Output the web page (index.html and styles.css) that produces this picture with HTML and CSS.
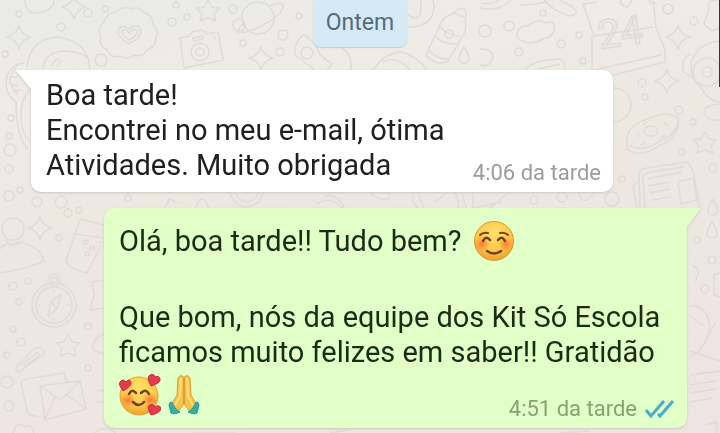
FILE: index.html
```html
<!DOCTYPE html>
<html lang="pt-BR">
<head>
<meta charset="utf-8">
<meta name="viewport" content="width=device-width, initial-scale=1">
<title>Conversa</title>
<link rel="stylesheet" href="styles.css">
</head>
<body>
<svg class="wallpaper" viewBox="0 0 720 433" preserveAspectRatio="xMidYMid slice" aria-hidden="true">
  <defs>
    <path id="spark" d="M0-12Q1-3 12 0Q2 3 0 12Q-2 3-12 0Q-2-3 0-12Z"/>
    <path id="star" d="M0-11L4-4L11-3L6 3L8 10L0 7L-8 10L-6 3L-11-3L-4-4Z"/>
    <path id="drop" d="M0-8Q10 7 0 8Q-10 7 0-8Z"/>
  </defs>
  <!-- top left: balloon, astronaut, badge, camera -->
  <path d="M25 0Q25 11 33 13Q47 14 54 4V0"/>
  <use href="#spark" x="19" y="37"/>
  <use href="#spark" x="74" y="7"/>
  <path d="M27 67Q30 39 57 37Q88 40 90 69M43 69Q45 51 66 51Q83 52 90 60M52 66Q53 60 59 59M57 67Q58 63 61 61"/>
  <path d="M24 63Q6 66 6 84Q6 95 16 102Q16 137 28 149M17 67Q10 72 10 83L17 94M11 77H17M10 84L18 86M13 92L20 90M31 88Q20 99 21 118Q22 136 31 142"/>
  <path d="M104 22Q107 12 116 12Q123 5 131 9Q140 6 144 13Q153 15 153 24Q160 31 156 37Q156 47 147 50Q143 58 134 55Q127 61 121 56Q111 59 107 50Q98 46 101 37Q96 28 104 22Z"/>
  <path d="M129 44Q117 36 118 30Q122 23 129 29Q137 22 141 30Q142 37 129 44Z"/>
  <path d="M129 40Q121 34 122 31Q125 27 129 33Q134 27 138 31Q137 36 129 40Z"/>
  <path d="M180 38L189 36L192 32L202 30L207 34L218 32L223 60L184 68ZM193 38L203 36V39L194 41ZM213 36L216 39"/>
  <circle cx="200" cy="52" r="9"/><circle cx="200" cy="52" r="4"/>
  <use href="#star" x="208" y="11"/>
  <!-- top centre: planet, rocket, bottle -->
  <circle cx="258" cy="18" r="16"/>
  <path d="M243 24Q229 38 255 29Q283 16 283 6Q283 1 269 6"/>
  <use href="#spark" x="261" y="58"/>
  <path d="M295 56Q294 40 304 35Q316 42 320 55L332 64L327 70M296 56L310 66L314 70M340 47Q352 52 351 70"/>
  <circle cx="307" cy="53" r="6"/>
  <path d="M405 0Q404 16 415 18Q421 18 421 6V0M406 27Q425 28 432 16Q435 8 433 0"/>
  <path d="M452 14L459 9Q466 7 466 15L465 21Q467 27 464 34L448 61Q437 67 426 55L440 25Q443 17 452 14ZM440 27Q448 36 461 36M435 36Q443 45 457 44M428 49Q437 60 449 59M454 13L464 17"/>
  <circle cx="449" cy="34" r="4"/>
  <path d="M373 70Q384 53 402 52Q418 57 427 70M382 62Q398 55 410 70"/>
  <use href="#drop" x="464" y="55"/>
  <!-- top right: cloud, calendar, owl -->
  <path d="M480 8Q500 12 511 0M481 3Q493 5 499 0M520 5Q541 5 548 0M544 0Q553 11 570 16Q580 14 574 8L560 0"/>
  <path d="M518 32Q520 25 528 26Q538 18 546 23Q556 20 554 30Q552 38 545 38Q530 47 519 39Q515 35 518 32Z"/>
  <path d="M583 4L594 36L653 27M583 4L597 2M653 0L656 27L665 50V62L597 79L592 69V36M594 70L661 55M620 0Q621 7 628 7L632 0M649 0Q650 4 656 3"/>
  <text x="600" y="49" transform="rotate(-8 600 49)">24</text>
  <use href="#spark" x="678" y="37"/>
  <use href="#spark" x="667" y="81"/>
  <path d="M525 70Q532 60 560 59Q566 61 565 70M538 69L560 64M720 0Q705 0 709 8L704 24L712 31L720 28M720 41Q697 43 691 63Q690 78 702 89Q709 101 720 102M690 54Q680 59 684 72L694 79M720 104Q703 105 704 113Q708 122 720 120"/>
  <circle cx="707" cy="72" r="14"/><circle cx="707" cy="72" r="5"/>
  <path d="M480 49Q492 48 493 57Q490 68 480 65"/>
  <!-- right side: donut, newspaper -->
  <circle cx="614" cy="105" r="17"/>
  <path d="M627 142Q626 125 648 119Q667 110 678 118Q681 135 661 145Q640 159 627 149ZM629 145Q642 153 660 141Q678 133 678 121"/>
  <ellipse cx="651" cy="131" rx="7" ry="5"/>
  <path d="M637 133L640 137M643 125L647 122M664 122L668 126M660 138L665 135M640 145L645 143"/>
  <use href="#star" x="705" y="143"/>
  <path d="M640 208L639 174Q640 169 647 168L687 162L693 170L700 208M645 208L643 178Q644 173 650 172L684 167M647 179L682 172M648 186L670 182M650 193L670 189M652 200L671 197M678 182L693 178L697 200L681 204ZM639 181L633 186L637 208"/>
  <use href="#drop" x="713" y="207"/><use href="#drop" x="712" y="230"/>
  <path d="M692 265Q703 270 695 281M714 275L720 273M714 275V295L720 297M690 306Q709 305 710 330Q704 350 690 357M690 316L703 326M690 351L720 361M707 338L716 322M690 375L720 371M690 385L716 381M690 393L716 389M690 402L713 398M705 425L717 422V433"/>
  <!-- gap between messages -->
  <path d="M230 193Q235 207 246 207Q260 206 263 193M235 193Q240 202 247 202Q256 201 258 193M196 208Q199 196 205 200L209 208M165 207L170 199L177 203M317 204Q330 195 342 208M324 196Q338 193 344 208M370 194L380 199H389V193M413 193Q411 202 418 208M418 193L424 208M435 202L447 193M455 193Q460 200 458 208M462 193L466 208M473 193V208L501 202M490 208L508 193M579 193Q584 208 593 193"/>
  <!-- left side: person, glass, compass, letter -->
  <circle cx="13" cy="229" r="11"/>
  <path d="M0 249Q7 241 15 245L21 242Q42 248 44 261Q27 269 0 273M6 240L11 246L18 241"/>
  <use href="#spark" x="40" y="228"/>
  <path d="M80 219L104 225M80 219L66 261Q69 269 87 273L101 246M75 234L103 238M70 249L66 260M98 242L104 243"/>
  <circle cx="86" cy="242" r="2"/><circle cx="92" cy="248" r="2"/><circle cx="87" cy="254" r="2"/>
  <circle cx="54" cy="305" r="22"/><circle cx="54" cy="305" r="18"/><circle cx="54" cy="280" r="6"/><circle cx="54" cy="280" r="3"/>
  <path d="M61 294L57 309L48 316L51 302ZM51 302L57 309M54 289V292M54 318V321M38 305H41M67 305H70M103 280L92 282L94 295L90 310L103 308M104 334Q92 338 93 350L104 354"/>
  <use href="#star" x="68" y="346"/>
  <path d="M16 367L35 348Q44 346 44 354L22 370Q15 374 16 367ZM21 365L37 353Q41 354 38 357L24 366"/>
  <path d="M39 417L28 414L21 384Q21 380 26 379L64 373L67 382M40 386L80 381L86 409L45 420ZM40 386L61 400L80 381M45 420L55 396M86 409L67 395M98 390L104 391M97 402H104"/>
  <path d="M13 433L15 427Q21 422 25 427Q31 423 34 433M94 433Q104 424 116 433M192 433H236M330 433L350 430M560 433L590 431"/>
  <!-- confetti -->
  <g>
    <circle cx="19" cy="14" r="3"/><circle cx="61" cy="27" r="4"/><circle cx="88" cy="13" r="4"/><circle cx="105" cy="9" r="3"/><circle cx="101" cy="60" r="6"/><circle cx="5" cy="54" r="3"/><circle cx="172" cy="22" r="4"/><circle cx="187" cy="17" r="3"/><circle cx="176" cy="5" r="3"/><circle cx="233" cy="9" r="4"/><circle cx="239" cy="25" r="6"/>
    <circle cx="283" cy="35" r="5"/><circle cx="299" cy="16" r="3"/><circle cx="280" cy="52" r="4"/><circle cx="243" cy="43" r="3"/><circle cx="509" cy="26" r="5"/><circle cx="543" cy="13" r="3"/><circle cx="579" cy="35" r="3"/><circle cx="561" cy="44" r="4"/><circle cx="519" cy="52" r="4"/><circle cx="583" cy="61" r="3"/><circle cx="668" cy="9" r="5"/><circle cx="694" cy="21" r="4"/><circle cx="485" cy="31" r="6"/>
    <circle cx="642" cy="83" r="4"/><circle cx="645" cy="97" r="3"/><circle cx="679" cy="110" r="4"/><circle cx="693" cy="122" r="3"/><circle cx="682" cy="152" r="3"/><circle cx="713" cy="168" r="4"/><circle cx="622" cy="179" r="3"/><circle cx="612" cy="199" r="7"/><circle cx="712" cy="260" r="4"/><circle cx="705" cy="289" r="4"/><circle cx="697" cy="240" r="3"/>
    <circle cx="11" cy="118" r="3"/><circle cx="9" cy="136" r="3"/><circle cx="10" cy="150" r="6"/><circle cx="9" cy="169" r="4"/><circle cx="9" cy="196" r="5"/><circle cx="20" cy="190" r="3"/><circle cx="37" cy="202" r="5"/><circle cx="61" cy="202" r="6"/><circle cx="68" cy="213" r="4"/><circle cx="59" cy="238" r="3"/><circle cx="79" cy="210" r="3"/><circle cx="128" cy="198" r="3"/><circle cx="534" cy="200" r="4"/><circle cx="562" cy="197" r="5"/><circle cx="13" cy="286" r="4"/><circle cx="19" cy="302" r="3"/><circle cx="28" cy="281" r="3"/><circle cx="13" cy="329" r="3"/><circle cx="21" cy="342" r="4"/><circle cx="88" cy="326" r="3"/><circle cx="7" cy="382" r="6"/><circle cx="9" cy="406" r="5"/><circle cx="7" cy="355" r="3"/><circle cx="88" cy="368" r="3"/>
  </g>
</svg>
<div class="edge"></div>

<main class="chat">
  <div class="day">Ontem</div>

  <article class="message received">
    <svg class="tail" viewBox="0 0 16 20" aria-hidden="true"><path d="M16 0H1Q-1 0 1 2L16 20Z"/></svg>
    <p class="text">Boa tarde!<br>Encontrei no meu e-mail, ótima<br>Atividades. Muito obrigada</p>
    <footer class="meta"><time datetime="16:06">4:06 da tarde</time></footer>
  </article>

  <article class="message sent">
    <svg class="tail" viewBox="0 0 16 20" aria-hidden="true"><path d="M0 0H13Q15 0 13 3L0 20Z"/></svg>
    <p class="text greeting">Olá, boa tarde!! Tudo bem?
      <svg class="emoji" viewBox="0 0 42 42" role="img" aria-label="Rosto sorridente">
        <defs>
          <radialGradient id="face" cx=".5" cy=".3" r=".7"><stop offset="0" stop-color="#ffe16b"/><stop offset=".65" stop-color="#fdc748"/><stop offset="1" stop-color="#eda12e"/></radialGradient>
          <radialGradient id="blush"><stop offset="0" stop-color="#f9682e" stop-opacity=".85"/><stop offset="1" stop-color="#f9863a" stop-opacity="0"/></radialGradient>
        </defs>
        <circle cx="21" cy="21" r="19.5" fill="url(#face)" stroke="#dc972d"/>
        <circle cx="9" cy="24" r="8" fill="url(#blush)"/><circle cx="33" cy="24" r="8" fill="url(#blush)"/>
        <path class="feature" d="M10 21Q13 15 17 20M25 20Q29 15 32 21M14 31Q21 36 28 31"/>
        <path class="brow" d="M7 15Q10 12 15 13M27 13Q32 12 35 15"/>
      </svg>
    </p>
    <p class="text">Que bom, nós da equipe dos Kit Só Escola<br>ficamos muito felizes em saber!! Gratidão</p>
    <p class="reactions">
      <svg class="emoji" viewBox="0 0 42 42" role="img" aria-label="Rosto sorridente com corações">
        <circle cx="20" cy="22" r="19" fill="url(#face)" stroke="#e6a334"/>
        <circle cx="9" cy="26" r="8" fill="url(#blush)"/><circle cx="31" cy="26" r="8" fill="url(#blush)"/>
        <path class="feature" d="M10 20Q13 14 17 19M22 19Q27 14 30 20M14 28Q20 34 25 28"/>
        <g class="hearts">
          <path d="M4 17Q-1 10 1 8Q4 4 7 8Q10 4 12 8Q13 12 4 17Z"/>
          <path d="M32 12Q27 3 31 1Q35-1 36 3Q40 1 41 5Q42 9 32 12Z"/>
          <path d="M32 41Q27 32 31 31Q34 29 36 33Q40 30 42 34Q42 39 32 41Z"/>
        </g>
      </svg>
      <svg class="emoji" viewBox="0 0 42 42" role="img" aria-label="Mãos juntas">
        <path d="M21 3Q17 0 15 4L14 21L8 31L12 38Q19 36 21 28Q23 36 30 38L34 31L28 21L27 4Q25 0 21 3Z" fill="#f9c348" stroke="#dc9e35"/>
        <path d="M18 4L17 22L12 31M24 4L25 22L30 31" fill="none" stroke="#ffdf7b" stroke-width="2"/>
        <path d="M21 4V29" stroke="#b97a2c" stroke-width="1"/>
        <path d="M9 28Q6 28 6 31L8 39Q11 41 17 38Q11 35 9 28ZM33 28Q36 28 36 31L34 39Q31 41 25 38Q31 35 33 28Z" fill="#35ada7" stroke="#299b92"/>
      </svg>
    </p>
    <footer class="meta">
      <time datetime="16:51">4:51 da tarde</time>
      <svg class="ticks" viewBox="0 0 30 20" role="img" aria-label="Lida"><path d="M1 11L6 17L19 2M13 15L15 17L28 2"/></svg>
    </footer>
  </article>
</main>
</body>
</html>
```
FILE: styles.css
```css
* {
  box-sizing: border-box;
}

body {
  margin: 0;
  min-height: 100vh;
  position: relative;
  overflow: hidden;
  font-family: Roboto, "Liberation Sans", sans-serif;
  background: linear-gradient(170deg, #ebebe6 0%, #edece5 22%, #eee7e1 45%, #efe5e0 100%);
}

.wallpaper {
  position: absolute;
  inset: 0;
  width: 100%;
  height: 100%;
  fill: none;
  stroke: #dfdbd5;
  stroke-width: 1.5;
  stroke-linejoin: round;
}

.wallpaper text {
  font-size: 40px;
}

.edge {
  position: absolute;
  top: 0;
  right: 0;
  width: 1px;
  height: 87px;
  background: #30343f;
}

.chat {
  position: relative;
  display: flex;
  flex-direction: column;
}

.day {
  align-self: center;
  padding: 5px 13px 7px;
  border-radius: 0 0 8px 8px;
  background: #d4eaf7;
  box-shadow: 0 1px 1px #c5cdd0;
  color: #566b78;
  font-size: 23px;
  line-height: 35px;
}

.message {
  position: relative;
  padding: 8px 15px 9px;
  border-radius: 10px;
  color: #202020;
  font-size: 29px;
  line-height: 35px;
  filter: drop-shadow(0 1px 1px #c9c5bf);
}

.received {
  margin: 23px 107px 0 31px;
  border-top-left-radius: 0;
  background: #fff;
  fill: #fff;
}

.sent {
  margin: 16px 33px 4px 104px;
  padding: 12px 15px;
  border-top-right-radius: 0;
  background: #e1ffc7;
  fill: #e1ffc7;
  color: #1c2b14;
}

.tail {
  position: absolute;
  top: 0;
  width: 16px;
  height: 20px;
}

.received .tail {
  right: 100%;
  margin-right: -1px;
}

.sent .tail {
  left: 100%;
  margin-left: -1px;
}

.text {
  margin: 0;
}

.greeting {
  display: flex;
  align-items: center;
  gap: 12px;
  margin-bottom: 38px;
}

.reactions {
  display: flex;
  gap: 2px;
  margin: 4px 0 0;
}

.emoji {
  width: 42px;
  height: 42px;
}

.feature,
.brow {
  fill: none;
  stroke: #70401c;
  stroke-width: 2.5;
  stroke-linecap: round;
}

.brow {
  stroke-width: 2;
}

.hearts {
  fill: #e73b4d;
  stroke: #bf2b3d;
}

.meta {
  position: absolute;
  right: 12px;
  bottom: 6px;
  display: flex;
  align-items: center;
  gap: 8px;
  color: #9c9c9c;
  font-size: 22px;
  line-height: 26px;
}

.sent .meta {
  color: #84a274;
}

.ticks {
  width: 30px;
  height: 20px;
  fill: none;
  stroke: #4aacc9;
  stroke-width: 3;
}
```
